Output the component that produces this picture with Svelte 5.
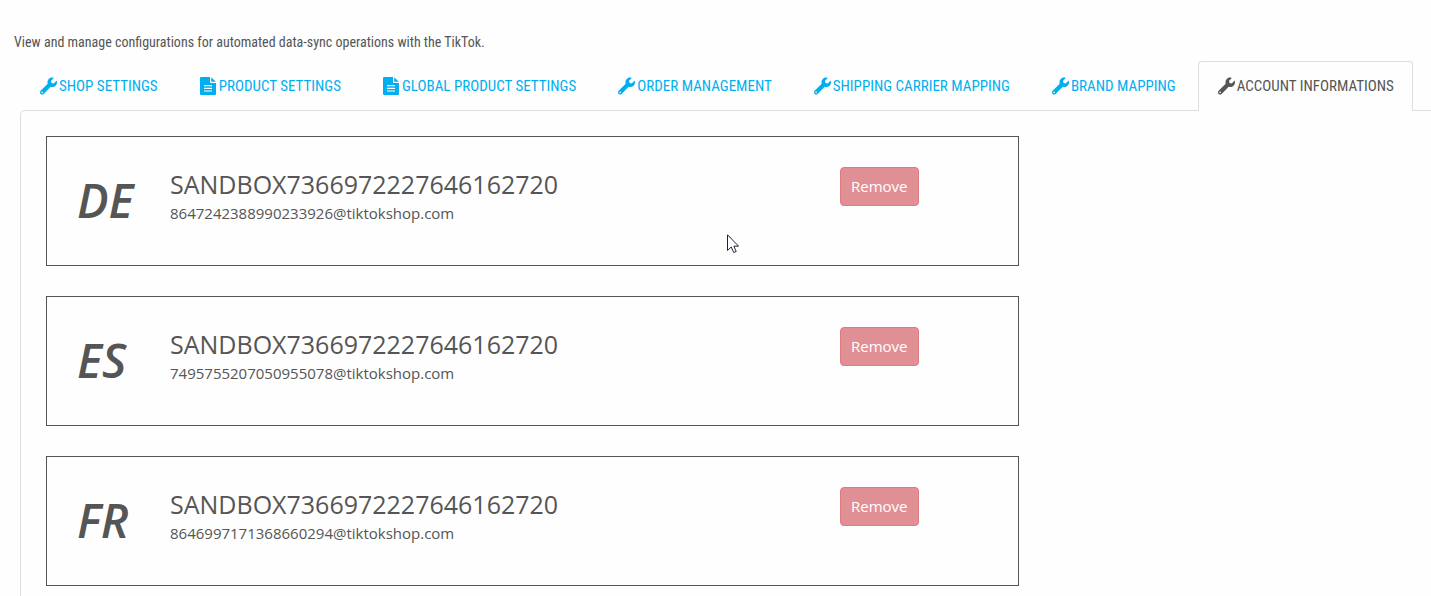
<script>
  const tabs = [
    { label: 'SHOP SETTINGS', icon: 'wrench' },
    { label: 'PRODUCT SETTINGS', icon: 'file' },
    { label: 'GLOBAL PRODUCT SETTINGS', icon: 'file' },
    { label: 'ORDER MANAGEMENT', icon: 'wrench' },
    { label: 'SHIPPING CARRIER MAPPING', icon: 'wrench' },
    { label: 'BRAND MAPPING', icon: 'wrench' },
    { label: 'ACCOUNT INFORMATIONS', icon: 'wrench' }
  ];
  let active = $state('ACCOUNT INFORMATIONS');

  const accounts = [
    { code: 'DE', name: 'SANDBOX7366972227646162720', email: '8647242388990233926@tiktokshop.com' },
    { code: 'ES', name: 'SANDBOX7366972227646162720', email: '7495755207050955078@tiktokshop.com' },
    { code: 'FR', name: 'SANDBOX7366972227646162720', email: '8646997171368660294@tiktokshop.com' }
  ];
</script>

<main>
  <p class="intro">View and manage configurations for automated data-sync operations with the TikTok.</p>

  <nav class="tabs">
    {#each tabs as tab}
      <a
        href="#panel"
        class="tab"
        class:active={active === tab.label}
        onclick={(e) => { e.preventDefault(); active = tab.label; }}
      >
        {#if tab.icon === 'wrench'}
          <svg viewBox="0 0 512 512" aria-hidden="true">
            <path d="M507.73 109.1c-2.24-9.03-13.54-12.09-20.12-5.51l-74.36 74.36-67.88-11.31-11.31-67.88 74.36-74.36c6.62-6.62 3.43-17.9-5.66-20.16-47.38-11.74-99.55.91-136.58 37.93-39.64 39.64-50.55 97.1-34.05 147.2L18.74 402.76c-24.99 24.99-24.99 65.51 0 90.5 24.99 24.99 65.51 24.99 90.5 0l213.21-213.21c50.12 16.71 107.47 5.68 147.37-34.22 37.07-37.07 49.7-89.32 37.91-136.73zM64 472c-13.25 0-24-10.75-24-24 0-13.26 10.75-24 24-24s24 10.74 24 24c0 13.25-10.75 24-24 24z" />
          </svg>
        {:else}
          <svg viewBox="0 0 17 18" aria-hidden="true">
            <path fill-rule="evenodd" d="M1 0H10V5.2Q10 6 10.800 6H16V17Q16 18 15 18H1Q0 18 0 17V1Q0 0 1 0ZM4 8V9.200H12V8ZM4 10.700V11.900H12V10.700ZM4 13.400V14.600H12V13.400Z" />
            <path d="M11.200 0.200L15.800 4.800H11.200Z" />
          </svg>
        {/if}
        <span>{tab.label}</span>
      </a>
    {/each}
  </nav>

  <section class="panel" id="panel">
    {#each accounts as account}
      <article class="card">
        <strong class="code">{account.code}</strong>
        <div class="info">
          <h2>{account.name}</h2>
          <p>{account.email}</p>
        </div>
        <div class="action"><button type="button" disabled>Remove</button></div>
      </article>
    {/each}
  </section>

  <svg class="pointer" viewBox="0 0 12 20" aria-hidden="true">
    <path d="M0.500 0.800V16.500L4.200 13L6.800 18.500L9.200 17.500L6.900 12.200H11.600Z" />
  </svg>
</main>

<style>
  :global(body) {
    background: #fefefe;
  }
  main {
    position: relative;
    overflow: hidden;
    padding-top: 32px;
    color: #555;
    font-family: "Open Sans", "Noto Sans", sans-serif;
  }
  .intro {
    margin: 0 14px;
    font: 14px/20px "Ubuntu Condensed", "Roboto Condensed", "Liberation Sans Narrow", sans-serif;
  }
  .tabs {
    display: flex;
    padding: 9px 0 0 20px;
    font: 15px/24px "Ubuntu Condensed", "Roboto Condensed", "Liberation Sans Narrow", sans-serif;
  }
  .tab {
    display: flex;
    align-items: center;
    gap: 2px;
    padding: 12px 21px 12px 19px;
    border: 1px solid transparent;
    border-bottom: 0;
    border-radius: 4px 4px 0 0;
    color: #00aff0;
    text-decoration: none;
    white-space: nowrap;
  }
  .tab.active {
    position: relative;
    margin-bottom: -1px;
    padding-right: 18px;
    padding-bottom: 13px;
    border-color: #ddd;
    background: #fefefe;
    color: #555;
  }
  .tab svg {
    flex: none;
    width: 17px;
    height: 18px;
    fill: currentColor;
  }
  .panel {
    display: flex;
    flex-direction: column;
    gap: 30px;
    margin: 0 -5px 0 20px;
    padding: 25px 0 30px 25px;
    border: 1px solid #ddd;
    border-right: 0;
    border-radius: 5px 0 0 0;
  }
  .card {
    box-sizing: border-box;
    display: grid;
    grid-template-columns: 93px 1fr 148px;
    align-items: start;
    width: 70%;
    min-height: 130px;
    padding: 30px;
    border: 1px solid #555;
  }
  .code {
    font-size: 47px;
    line-height: 66px;
    font-weight: 600;
    font-style: italic;
  }
  h2 {
    margin: 0;
    font-size: 25px;
    line-height: 34px;
    font-weight: 400;
  }
  .info p {
    margin: 2px 0 0;
    font-size: 15px;
    line-height: 20px;
  }
  button {
    padding: 8px 10px;
    border: 1px solid #dd7a82;
    border-radius: 4px;
    background: #e08f95;
    color: #fff;
    font: 15px/21px "Open Sans", "Noto Sans", sans-serif;
  }
  .pointer {
    position: absolute;
    left: 727px;
    top: 234px;
    width: 12px;
    height: 20px;
    fill: #fff;
    stroke: #223;
  }
</style>
